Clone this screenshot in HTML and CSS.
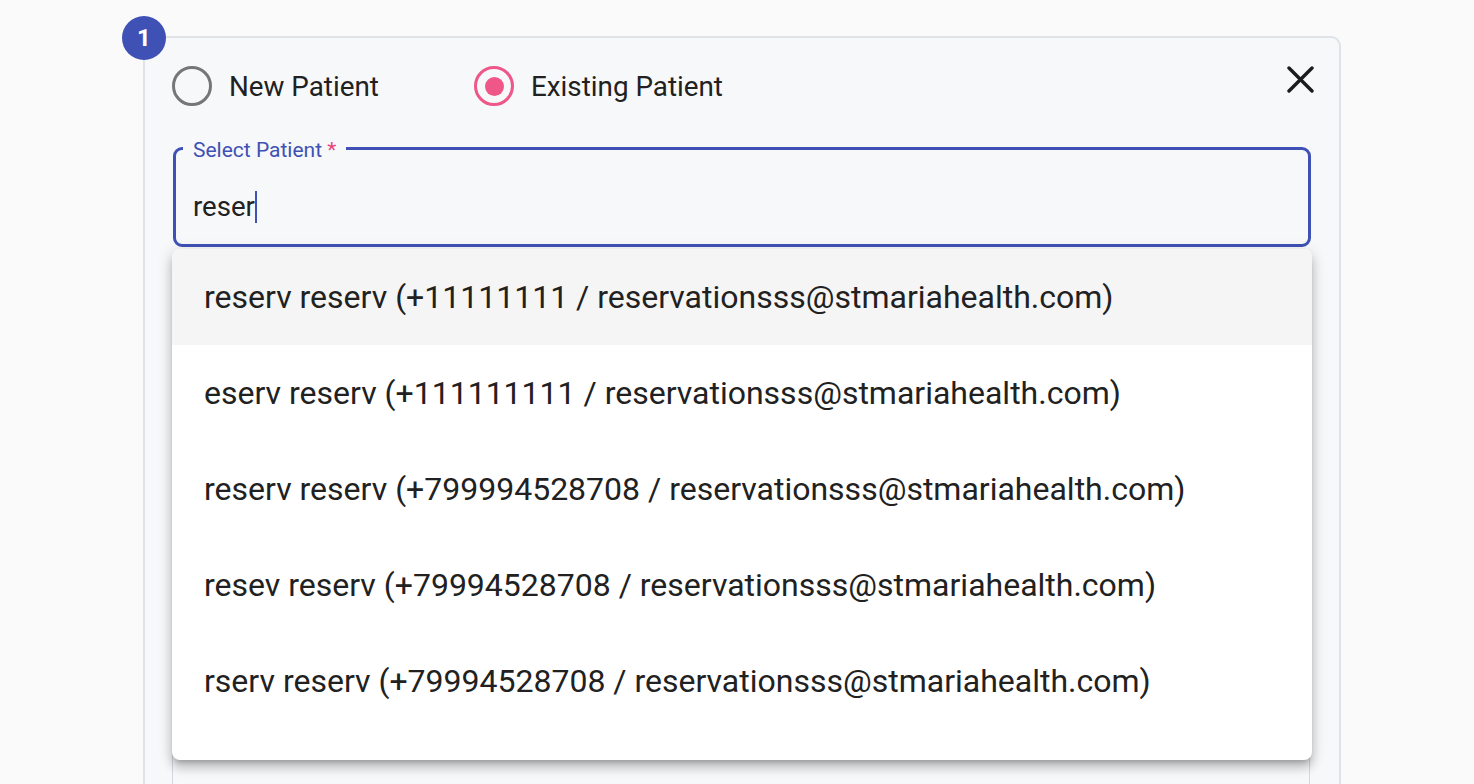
FILE: index.html
```html
<!DOCTYPE html>
<html>
<head>
<meta charset="utf-8">
<link rel="stylesheet" href="styles.css">
</head>
<body>
<div class="page">
  <div class="card">
    <div class="badge">1</div>
    <div class="head">
      <label class="opt opt-first"><span class="radio"></span><span class="opt-text">New Patient</span></label>
      <label class="opt"><span class="radio checked"><span class="dot"></span></span><span class="opt-text">Existing Patient</span></label>
      <button class="close" aria-label="close">
        <svg width="27" height="27" viewBox="0 0 27 27"><path d="M2 2 L25 25 M25 2 L2 25" stroke="#1c1c1c" stroke-width="3.4" stroke-linecap="round" fill="none"/></svg>
      </button>
    </div>
    <div class="field-wrap">
      <div class="field focused">
        <span class="flabel">Select Patient <span class="req">*</span></span>
        <div class="value">reser<span class="caret"></span></div>
      </div>
      <ul class="menu">
        <li class="item active">reserv reserv (+11111111 / reservationsss@stmariahealth.com)</li>
        <li class="item">eserv reserv (+111111111 / reservationsss@stmariahealth.com)</li>
        <li class="item">reserv reserv (+799994528708 / reservationsss@stmariahealth.com)</li>
        <li class="item">resev reserv (+79994528708 / reservationsss@stmariahealth.com)</li>
        <li class="item">rserv reserv (+79994528708 / reservationsss@stmariahealth.com)</li>
      </ul>
    </div>
    <div class="field next"></div>
  </div>
</div>
</body>
</html>
```
FILE: styles.css
```css
* { box-sizing: border-box; }
html, body { margin: 0; padding: 0; }
body {
  background: #fafafa;
  font-family: Roboto, "Liberation Sans", Arial, sans-serif;
  color: #212121;
  overflow: hidden;
}
.page {
  padding: 36px 0 0 143px;
}
.card {
  position: relative;
  width: 1198px;
  min-height: 900px;
  background: #f7f8fa;
  border: 2px solid #dfe3e8;
  border-radius: 10px;
  padding: 28px 27px 0 27px;
}
.badge {
  position: absolute;
  left: -23px;
  top: -22px;
  width: 44px;
  height: 44px;
  border-radius: 50%;
  background: #3f51b5;
  color: #fff;
  font-weight: 700;
  font-size: 24px;
  display: flex;
  align-items: center;
  justify-content: center;
}
.head {
  display: flex;
  align-items: flex-start;
  height: 40px;
}
.opt {
  display: flex;
  align-items: center;
  height: 40px;
}
.opt-first { width: 302px; }
.radio {
  width: 40px;
  height: 40px;
  border-radius: 50%;
  border: 3.4px solid #767676;
  display: flex;
  align-items: center;
  justify-content: center;
  flex: none;
}
.radio.checked { border-color: #ee5787; }
.dot {
  width: 19px;
  height: 19px;
  border-radius: 50%;
  background: #ee5787;
}
.opt-text {
  margin-left: 17px;
  font-size: 27.8px;
  color: #212121;
}
.close {
  margin-left: auto;
  margin-right: -2px;
  padding: 0;
  border: 0;
  background: none;
  width: 27px;
  height: 27px;
  display: block;
}
.close svg { display: block; }
.field-wrap {
  position: relative;
  margin-top: 41px;
  margin-left: 1px;
  width: 1138px;
}
.field {
  position: relative;
  height: 100px;
  border: 3px solid #3f51b5;
  border-radius: 9px;
}
.flabel {
  position: absolute;
  left: 7px;
  top: -12px;
  padding: 0 10px;
  background: #f7f8fa;
  color: #3f51b5;
  font-size: 21px;
  line-height: 24px;
}
.req { color: #e8457a; }
.value {
  position: absolute;
  left: 17px;
  top: 40px;
  font-size: 27.6px;
  line-height: 34px;
  color: #212121;
  display: flex;
  align-items: center;
}
.caret {
  display: inline-block;
  width: 2px;
  height: 32px;
  background: #3f51b5;
}
.menu {
  position: absolute;
  z-index: 5;
  left: -1px;
  top: 102px;
  width: 1140px;
  margin: 0;
  padding: 0 0 31px 0;
  list-style: none;
  background: #fff;
  border-radius: 8px;
  box-shadow: 0 5px 5px -3px rgba(0,0,0,0.2), 0 8px 10px 1px rgba(0,0,0,0.14), 0 3px 14px 2px rgba(0,0,0,0.12);
  overflow: hidden;
}
.item {
  height: 96px;
  display: flex;
  align-items: center;
  padding-left: 32px;
  font-size: 32px;
  color: #212121;
  white-space: nowrap;
}
.item.active { background: #f5f5f5; }
.field.next {
  margin-top: 40px;
  width: 1138px;
  height: 600px;
  border: 1.5px solid #d3d7de;
  border-radius: 9px;
}
```
